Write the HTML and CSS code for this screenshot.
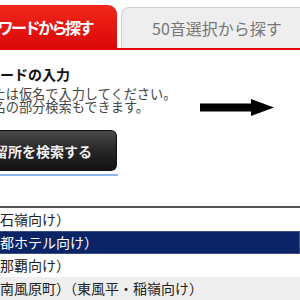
FILE: index.html
```html
<!DOCTYPE html>
<html lang="ja">
<head>
<meta charset="utf-8">
<link rel="stylesheet" href="styles.css">
</head>
<body>
<div class="tabs">
  <div class="tab tab-active"><span>キーワードから探す</span></div>
  <div class="tab tab-idle"><span>50音選択から探す</span></div>
</div>
<div class="panel">
  <h2 class="heading">キーワードの入力</h2>
  <div class="guide">
    <p class="desc">漢字または仮名で入力してください。<br>停留所名の部分検索もできます。</p>
    <svg class="arrow" width="74" height="18" viewBox="0 0 74 18"><path d="M0 4.5H51V0L74 8.5L51 17V12.5H0Z" fill="#000"/></svg>
  </div>
  <div class="btn-wrap">
    <button class="search-btn"><span>バス停留所を検索する</span></button>
  </div>
</div>
<ul class="results">
  <li class="row">（石嶺向け）</li>
  <li class="row row-selected">（都ホテル向け）</li>
  <li class="row">（那覇向け）</li>
  <li class="row row-alt">（南風原町）（東風平・稲嶺向け）</li>
</ul>
</body>
</html>
```

FILE: styles.css
```css
html, body {
  margin: 0;
  padding: 0;
  background: #fff;
  overflow: hidden;
}
body {
  font-family: "Noto Sans CJK JP", "Noto Sans", sans-serif;
  color: #222;
  width: 300px;
  height: 300px;
}
.tabs {
  display: flex;
  align-items: flex-end;
  height: 48px;
  border-bottom: 2px solid #e20a0a;
}
.tab {
  display: flex;
  align-items: center;
  white-space: nowrap;
  overflow: hidden;
  box-sizing: border-box;
}
.tab-active {
  width: 117px;
  height: 43px;
  justify-content: flex-end;
  padding-right: 25px;
  background: linear-gradient(#f2281a, #d90808);
  border-top-right-radius: 9px;
  color: #fff;
  font-weight: bold;
  font-size: 16px;
  letter-spacing: -2.5px;
}
.tab-idle {
  flex: 1;
  margin-left: 4px;
  margin-right: -10px;
  height: 41px;
  padding-left: 30px;
  background: #eeeeee;
  border: 1px solid #cfcfcf;
  border-bottom: none;
  border-top-left-radius: 8px;
  color: #777;
  font-size: 16px;
}
.panel {
  padding-top: 13px;
}
.heading {
  margin: 0 0 0 -42px;
  font-size: 14px;
  line-height: 22px;
  font-weight: bold;
  color: #111;
  white-space: nowrap;
}
.guide {
  display: flex;
  align-items: center;
  height: 30px;
}
.desc {
  margin: 0 0 0 -47px;
  width: 247px;
  flex: none;
  font-size: 13.2px;
  line-height: 13px;
  color: #444;
  white-space: nowrap;
}
.arrow {
  display: block;
  flex: none;
  margin-top: 16px;
}
.btn-wrap {
  padding-top: 15px;
  width: 118px;
  border-bottom: 2px solid #8fb6ec;
  padding-bottom: 3px;
}
.search-btn {
  display: flex;
  justify-content: flex-end;
  align-items: center;
  width: 117px;
  height: 41px;
  padding: 0 24px 0 0;
  overflow: hidden;
  white-space: nowrap;
  border: 1px solid #111;
  border-left: none;
  border-radius: 0 6px 6px 0;
  background: linear-gradient(#4a4a4a, #262626 50%, #141414);
  color: #eee;
  font-family: inherit;
  font-size: 14px;
  font-weight: bold;
}
.results {
  list-style: none;
  margin: 30px 0 0;
  padding: 0;
  border-top: 2px solid #555;
}
.row {
  height: 23px;
  line-height: 23px;
  font-size: 14px;
  color: #222;
  white-space: nowrap;
  margin-left: -14px;
  padding-left: 0;
}
.row-selected {
  background: #0b2466;
  color: #fff;
  box-shadow: inset 0 0 0 1px #3a4f8a;
}
.row-alt {
  background: #eeeeee;
}
```
